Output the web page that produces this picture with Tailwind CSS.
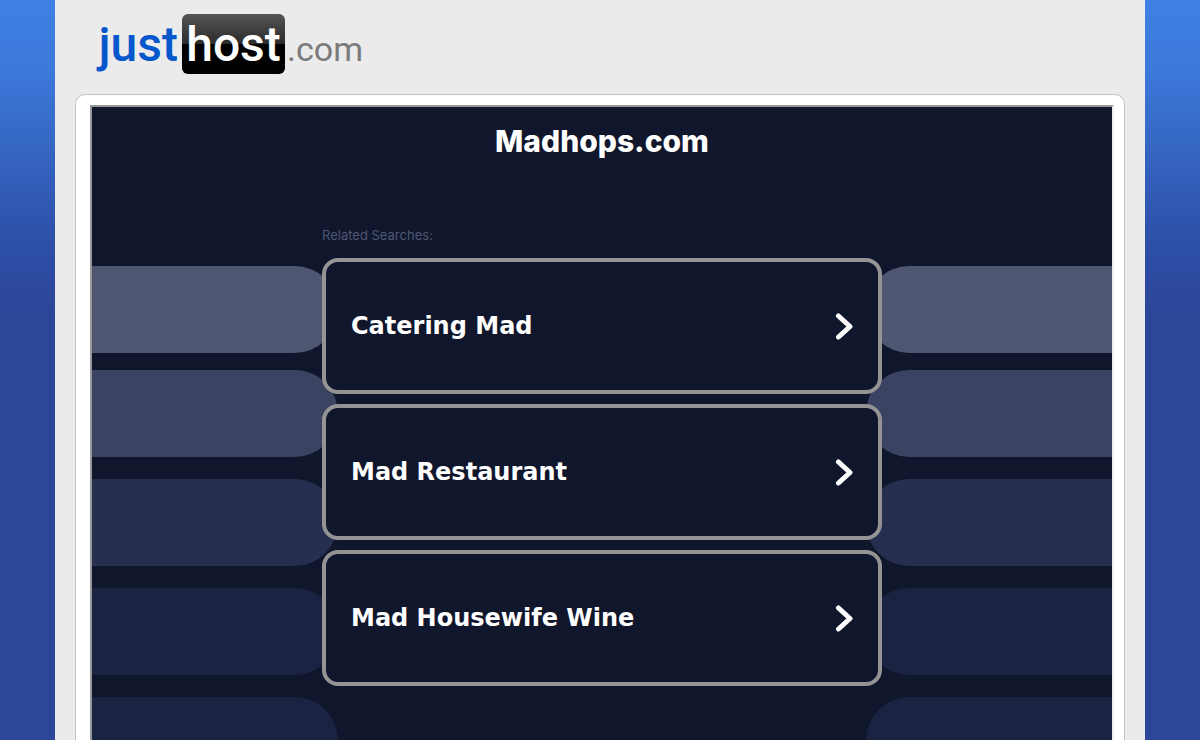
<!DOCTYPE html>
<html lang="en">
<head>
<meta charset="utf-8">
<meta name="viewport" content="width=device-width, initial-scale=1">
<title>Madhops.com</title>
<script src="https://cdn.jsdelivr.net/npm/@tailwindcss/browser@4"></script>
</head>
<body class="h-screen overflow-hidden bg-[#2c469a] bg-[linear-gradient(#3e80e4_0px,#3c79da_70px,#2e50a8_240px,#2c469a_310px)] px-[55px]">
<div class="flex h-full flex-col bg-[#ebebeb] px-5">
  <header class="flex h-[94px] shrink-0 pt-3.5 pl-[25px]">
    <a href="#" aria-label="justhost.com" class="flex h-[60px] items-baseline font-['Roboto','Noto_Sans',sans-serif] leading-[62px]">
      <span class="flex w-[82px] justify-end pr-1 text-[48px] font-medium text-[#0757cc]">just</span>
      <span class="h-[60px] w-[103px] rounded-md bg-[linear-gradient(#555_0px,#2b2b2b_30px,#000_30px)] text-center text-[48px] font-medium text-white">host</span>
      <span class="pl-0.5 text-[34px] text-[#7b7b7b]">.com</span>
    </a>
  </header>
  <div class="flex min-h-0 flex-1 rounded-t-[10px] border border-b-0 border-[#c4c4c4] bg-white pt-2.5 pr-2.5 pl-3.5">
    <main class="relative flex-1 overflow-hidden border-t-2 border-r-2 border-l-2 border-t-[#999] border-r-[#eee] border-l-[#999] bg-[#10162b]">
      <div aria-hidden="true" class="absolute inset-x-0 top-[159px] flex justify-between">
        <div class="flex w-[246px] flex-col gap-[22px]">
          <div class="-mb-[5px] h-[87px] rounded-r-full bg-[#4e5672]"></div>
          <div class="h-[87px] rounded-r-full bg-[#3b4363]"></div>
          <div class="h-[87px] rounded-r-full bg-[#262f4f]"></div>
          <div class="h-[87px] rounded-r-full bg-[#1a2342]"></div>
          <div class="h-[87px] rounded-r-full bg-[#1a2342]"></div>
        </div>
        <div class="flex w-[246px] flex-col gap-[22px]">
          <div class="-mb-[5px] h-[87px] rounded-l-full bg-[#4e5672]"></div>
          <div class="h-[87px] rounded-l-full bg-[#3b4363]"></div>
          <div class="h-[87px] rounded-l-full bg-[#262f4f]"></div>
          <div class="h-[87px] rounded-l-full bg-[#1a2342]"></div>
          <div class="h-[87px] rounded-l-full bg-[#1a2342]"></div>
        </div>
      </div>
      <div class="relative mx-auto flex max-w-[560px] flex-col">
        <h1 class="pt-3.5 text-center font-['Inter',sans-serif] text-[30px] leading-10 font-extrabold text-white">Madhops.com</h1>
        <p class="mt-16 font-['Inter',sans-serif] text-[13px] leading-5 text-[#4e5672]">Related Searches:</p>
        <nav aria-label="Related Searches" class="mt-[13px] flex flex-col gap-2.5 font-['DejaVu_Sans',sans-serif] text-2xl font-bold text-white">
          <a href="#" class="flex h-[136px] items-center justify-between rounded-2xl border-4 border-[#949494] bg-[#10162b] px-[25px]">Catering Mad
            <svg class="h-7 w-[18px]" viewBox="0 0 18 28" fill="none" stroke="currentColor" stroke-width="5" stroke-linecap="round" stroke-linejoin="round" aria-hidden="true"><path d="M3.5 4 15 14.5 3.5 25"/></svg>
          </a>
          <a href="#" class="flex h-[136px] items-center justify-between rounded-2xl border-4 border-[#949494] bg-[#10162b] px-[25px]">Mad Restaurant
            <svg class="h-7 w-[18px]" viewBox="0 0 18 28" fill="none" stroke="currentColor" stroke-width="5" stroke-linecap="round" stroke-linejoin="round" aria-hidden="true"><path d="M3.5 4 15 14.5 3.5 25"/></svg>
          </a>
          <a href="#" class="flex h-[136px] items-center justify-between rounded-2xl border-4 border-[#949494] bg-[#10162b] px-[25px]">Mad Housewife Wine
            <svg class="h-7 w-[18px]" viewBox="0 0 18 28" fill="none" stroke="currentColor" stroke-width="5" stroke-linecap="round" stroke-linejoin="round" aria-hidden="true"><path d="M3.5 4 15 14.5 3.5 25"/></svg>
          </a>
        </nav>
      </div>
    </main>
  </div>
</div>
</body>
</html>
